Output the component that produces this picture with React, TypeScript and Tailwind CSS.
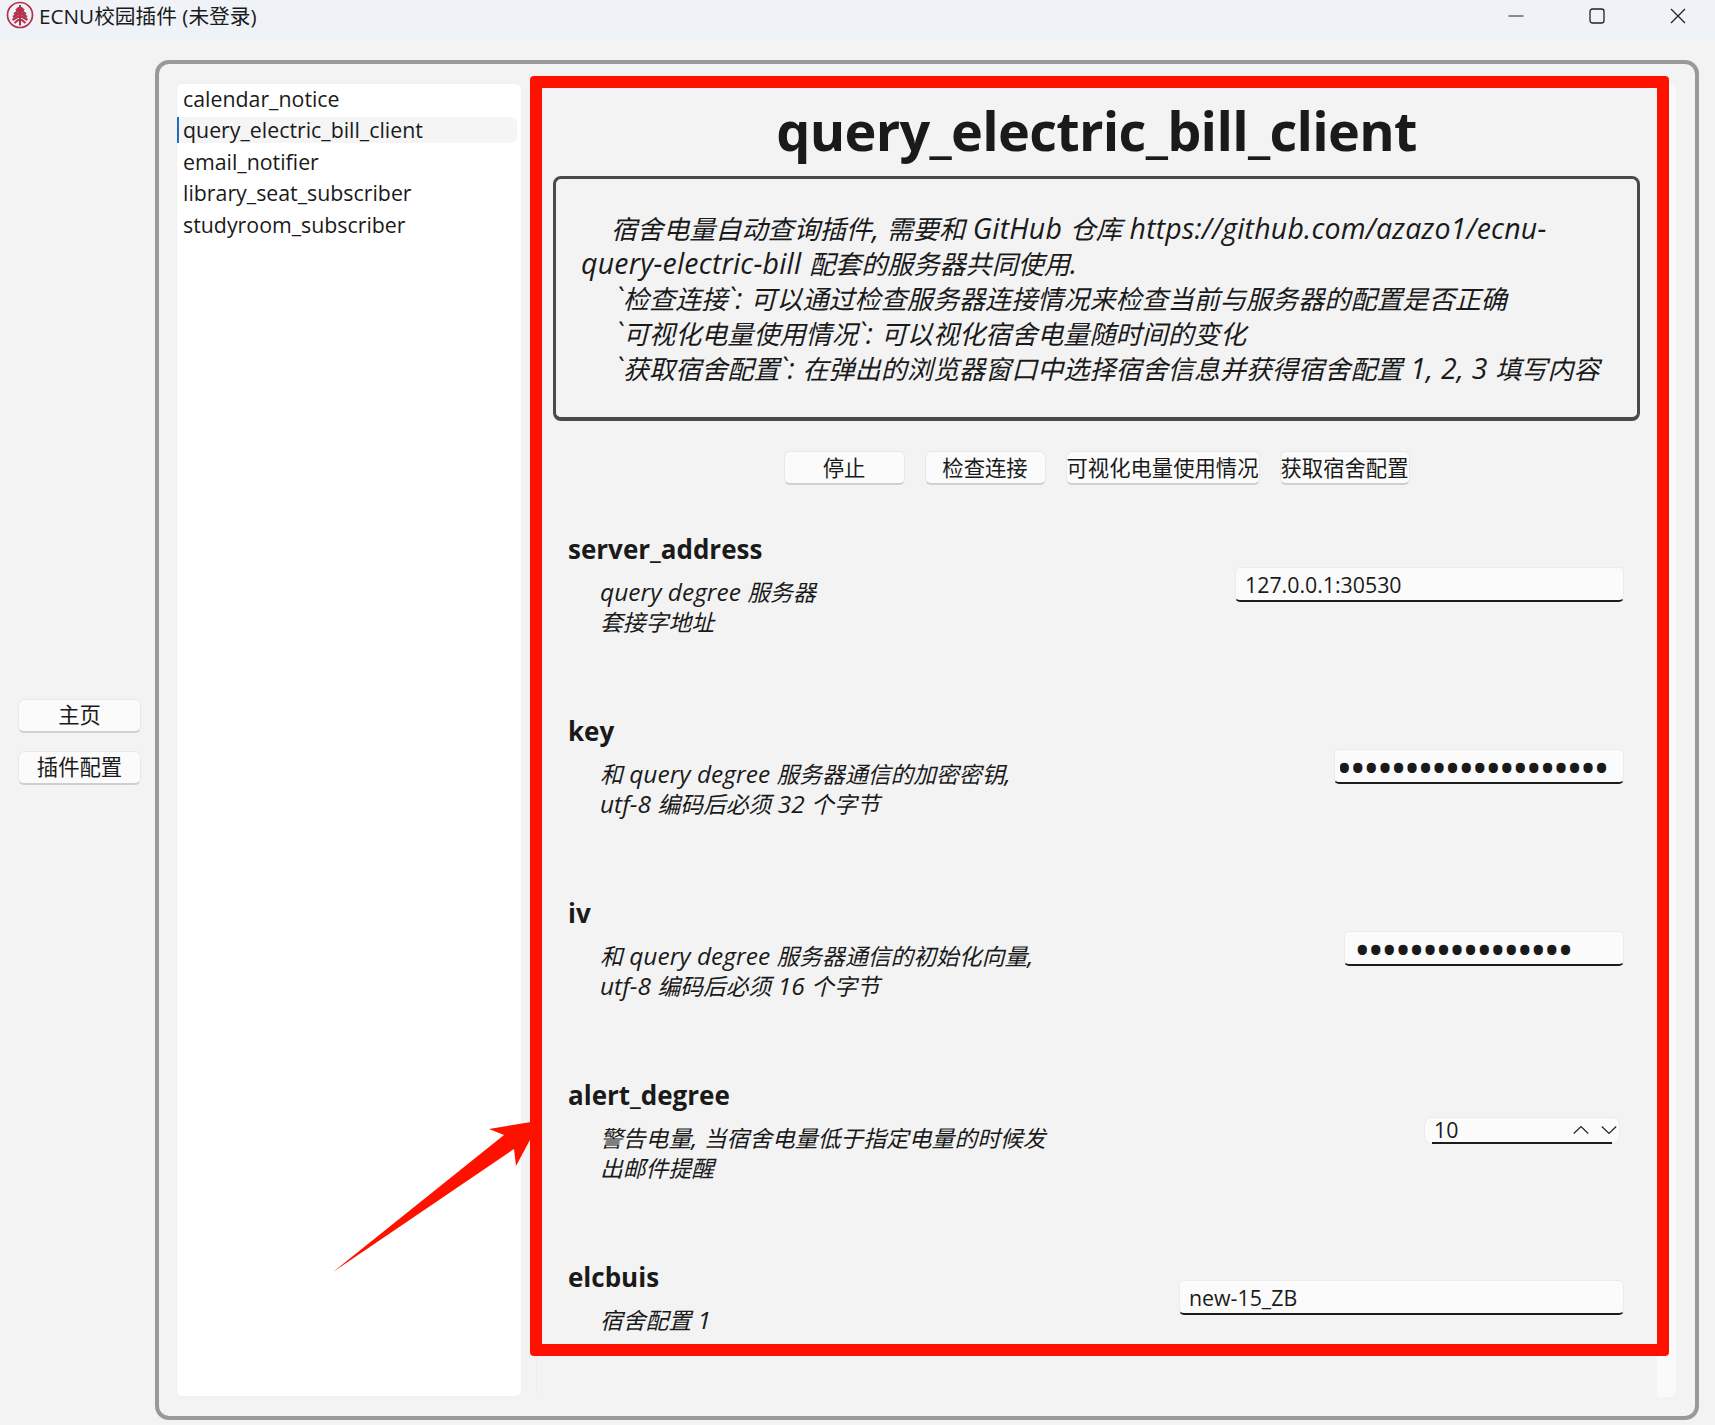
import * as React from 'react'

const FONT = 'font-["Open_Sans","Noto_Sans_CJK_SC",sans-serif]'

const PLUGINS = ['calendar_notice', 'query_electric_bill_client', 'email_notifier', 'library_seat_subscriber', 'studyroom_subscriber']

const DESC = [
  '`检查连接`: 可以通过检查服务器连接情况来检查当前与服务器的配置是否正确',
  '`可视化电量使用情况`: 可以视化宿舍电量随时间的变化',
  '`获取宿舍配置`: 在弹出的浏览器窗口中选择宿舍信息并获得宿舍配置 1, 2, 3 填写内容',
]

// latin runs sit a bit larger than the CJK around them
function Mixed({ text, latin }: { text: string; latin: string }) {
  const parts = text.split(/([A-Za-z0-9\-:.,/_` ]+)/)
  return (
    <>
      {parts.map((p, i) => (i % 2 === 1 ? <span key={i} className={latin}>{p}</span> : p))}
    </>
  )
}

function Logo() {
  return (
    <svg width="28" height="30" viewBox="0 0 28 30" className="shrink-0">
      <circle cx="14" cy="15" r="12.5" fill="none" stroke="#b5304a" strokeWidth="1.7" />
      <path d="M14 5 L14 25.5 M14 6.5 L10 10.5 M14 6.5 L18 10.5 M14 9.5 L8 14 M14 9.5 L20 14 M14 12.5 L7 17 M14 12.5 L21 17 M14 15.5 L6.5 20 M14 15.5 L21.5 20 M14 18.5 L8.5 23 M14 18.5 L19.5 23" fill="none" stroke="#b5304a" strokeWidth="2.1" />
    </svg>
  )
}

function SideButton({ label }: { label: string }) {
  return (
    <button className="w-[123px] h-[34px] rounded-[6px] border border-[#e8e8e8] border-b-2 border-b-[#cfcfcf] bg-[#fbfbfb] text-[21.33px] text-[#1a1a1a] leading-none">
      {label}
    </button>
  )
}

function ActionButton({ label, width }: { label: string; width: string }) {
  return (
    <button className={`${width} h-[34px] rounded-[6px] border border-[#e8e8e8] border-b-2 border-b-[#cfcfcf] bg-[#fbfbfb] text-[21.33px] text-[#1a1a1a] leading-none whitespace-nowrap`}>
      {label}
    </button>
  )
}

function TextField({ value, width }: { value: string; width: string }) {
  return (
    <div className={`${width} h-[35px] flex items-center rounded-[5px] border border-[#ebebeb] border-b-2 border-b-[#1c1c1c] bg-[#fbfbfb] px-[9px] pt-[3px] text-[21.33px] text-[#1a1a1a] overflow-hidden`}>
      {value}
    </div>
  )
}

// password box, dots are real bullet characters
function SecretField({ value, width, inner, clip }: { value: string; width: string; inner: string; clip?: boolean }) {
  return (
    <div className={`${width} h-[35px] flex items-center rounded-[5px] border border-[#ebebeb] border-b-2 border-b-[#1c1c1c] bg-[#fbfbfb] text-[#1a1a1a]`}>
      <div className={`flex-1 min-w-0 ml-[5px] mr-[5px] ${clip ? 'overflow-hidden' : ''}`}>
        <div className={`${inner} whitespace-nowrap text-[44px] leading-[30px] tracking-[-3px] pt-[3px]`}>{value}</div>
      </div>
    </div>
  )
}

function Field({ name, lines, children }: { name: string; lines: string[]; children: React.ReactNode }) {
  return (
    <div className="h-[182px] shrink-0 pl-[15px] pr-[16px]">
      <div className="flex justify-between items-center">
        <div>
          <div className="text-[26px] font-bold leading-[36px] text-[#1a1a1a]">{name}</div>
          <div className="mt-[11px] pl-[32px] text-[22.8px] italic leading-[29.5px] text-[#1a1a1a]">
            {lines.map((l) => <div key={l} className="whitespace-nowrap"><Mixed text={l} latin="text-[24.5px] leading-none" /></div>)}
          </div>
        </div>
        {children}
      </div>
    </div>
  )
}

export default function App() {
  return (
    <div className={`w-[1715px] h-[1425px] overflow-hidden bg-[#f3f3f3] flex flex-col relative ${FONT}`}>
      {/* title bar */}
      <div className="h-[40px] shrink-0 bg-[#eff3f8] flex items-start pl-[6px] text-[20.7px] text-[#1a1a1a]">
        <Logo />
        <span className="ml-[5px] leading-[32px] whitespace-nowrap">ECNU校园插件 (未登录)</span>
        <div className="ml-auto -mr-[3px] flex">
          <div className="w-[81px] h-[31px] flex items-center justify-center">
            <svg width="16" height="16" viewBox="0 0 16 16"><path d="M0.5 8H15.5" stroke="#222" strokeWidth="1" /></svg>
          </div>
          <div className="w-[81px] h-[31px] flex items-center justify-center">
            <svg width="16" height="16" viewBox="0 0 16 16"><rect x="1" y="1" width="14" height="14" rx="2.5" fill="none" stroke="#222" strokeWidth="1.3" /></svg>
          </div>
          <div className="w-[81px] h-[31px] flex items-center justify-center">
            <svg width="16" height="16" viewBox="0 0 16 16"><path d="M1 1L15 15M15 1L1 15" stroke="#222" strokeWidth="1.3" /></svg>
          </div>
        </div>
      </div>

      <div className="flex-1 flex items-stretch pt-[20px] pb-[5px] pl-[18px] pr-[16px] min-h-0">
        {/* left nav */}
        <div className="w-[137px] shrink-0 flex flex-col justify-center gap-[18px] pt-[3px]">
          <SideButton label="主页" />
          <SideButton label="插件配置" />
        </div>

        {/* main panel */}
        <div className="flex-1 min-w-0 rounded-[14px] border-[4px] border-[#999999] flex pt-[19px] pb-[19px] pl-[17px] pr-[19px]">
          {/* plugin list */}
          <div className="w-[346px] shrink-0 rounded-[6px] bg-white border border-[#f0f0f0] text-[21.33px] text-[#1a1a1a]">
            {PLUGINS.map((p, i) => (
              <div key={p} className="h-[31.5px] pb-[2px] flex items-center">
                <div className={`flex-1 h-[26px] flex items-center pl-[6px] relative rounded-[6px] mr-[4px] ${i === 1 ? 'bg-[#f5f5f5]' : ''}`}>
                  {i === 1 && <span className="absolute left-0 top-0 bottom-0 w-[2px] bg-[#1f6fc0]" />}
                  {p}
                </div>
              </div>
            ))}
          </div>

          {/* scroll area */}
          <div className="flex-1 min-w-0 ml-[14px] flex overflow-hidden rounded-[6px] border-l border-[#ececec] bg-[#f3f3f3]">
            <div className="flex-1 min-w-0 h-[1273px] overflow-hidden flex flex-col pl-[16px] pr-[17px]">
              <h1 className="shrink-0 mt-[9px] text-center text-[54px] font-bold tracking-[-0.7px] leading-[76px] text-[#1a1a1a]">query_electric_bill_client</h1>
              <div className="shrink-0 mt-[8px] h-[245px] rounded-[8px] border-[3px] border-b-[4px] border-[#4a4a4a] pt-[33px] pl-[25px] pr-[20px] text-[26.1px] italic leading-[35px] text-[#1a1a1a]">
                <div className="indent-[30px] whitespace-nowrap"><Mixed text="宿舍电量自动查询插件, 需要和 GitHub 仓库 https://github.com/azazo1/ecnu-" latin="text-[28.5px] leading-none tracking-[0.2px]" /></div>
                <div className="whitespace-nowrap"><Mixed text="query-electric-bill 配套的服务器共同使用." latin="text-[28.5px] leading-none tracking-[0.2px]" /></div>
                {DESC.map((d) => <div key={d} className="pl-[34px] whitespace-nowrap"><Mixed text={d} latin="text-[28.5px] leading-none tracking-[0.2px]" /></div>)}
              </div>
              <div className="shrink-0 mt-[30px] flex justify-center gap-[20px]">
                <ActionButton label="停止" width="w-[121px]" />
                <ActionButton label="检查连接" width="w-[121px]" />
                <ActionButton label="可视化电量使用情况" width="w-[194px]" />
                <ActionButton label="获取宿舍配置" width="w-[130px]" />
              </div>
              <div className="mt-[46px] flex flex-col">
                <Field name="server_address" lines={['query degree 服务器', '套接字地址']}>
                  <TextField value="127.0.0.1:30530" width="w-[389px]" />
                </Field>
                <Field name="key" lines={['和 query degree 服务器通信的加密密钥,', 'utf-8 编码后必须 32 个字节']}>
                  <SecretField value="••••••••••••••••••••" width="w-[290px]" inner="-ml-[4px]" clip />
                </Field>
                <Field name="iv" lines={['和 query degree 服务器通信的初始化向量,', 'utf-8 编码后必须 16 个字节']}>
                  <SecretField value="••••••••••••••••" width="w-[280px]" inner="ml-[4px]" />
                </Field>
                <Field name="alert_degree" lines={['警告电量, 当宿舍电量低于指定电量的时候发', '出邮件提醒']}>
                  <div className="w-[196px] h-[27px] mr-[4px] flex items-center rounded-[8px] border border-[#ebebeb] bg-[#fbfbfb] pl-[9px] pr-[2px] text-[21.33px] text-[#1a1a1a] relative">
                    10
                    <svg width="16" height="10" viewBox="0 0 16 10" className="ml-auto"><path d="M0.8 8.5L8 1.5L15.2 8.5" fill="none" stroke="#222" strokeWidth="1.2" /></svg>
                    <svg width="16" height="10" viewBox="0 0 16 10" className="ml-[12px]"><path d="M0.8 1.5L8 8.5L15.2 1.5" fill="none" stroke="#222" strokeWidth="1.2" /></svg>
                    <span className="absolute left-[7px] right-[7px] bottom-[-1px] h-[1.5px] bg-[#1c1c1c]" />
                  </div>
                </Field>
                <Field name="elcbuis" lines={['宿舍配置 1']}>
                  <TextField value="new-15_ZB" width="w-[445px]" />
                </Field>
              </div>
            </div>
            {/* scrollbar track */}
            <div className="w-[19px] shrink-0 bg-[#fafafa]" />
          </div>
        </div>
      </div>

      {/* annotation */}
      <div className="absolute left-[530px] top-[76px] w-[1139px] h-[1280px] border-[12px] border-[#ff1100] rounded-[4px] pointer-events-none" />
      <svg className="absolute left-0 top-0 pointer-events-none" width="1715" height="1425" viewBox="0 0 1715 1425">
        <path d="M333 1272 L504 1135 L489 1129 L531 1122 L531 1138 L516 1166 L514 1149 Z" fill="#ff1100" />
      </svg>
    </div>
  )
}
